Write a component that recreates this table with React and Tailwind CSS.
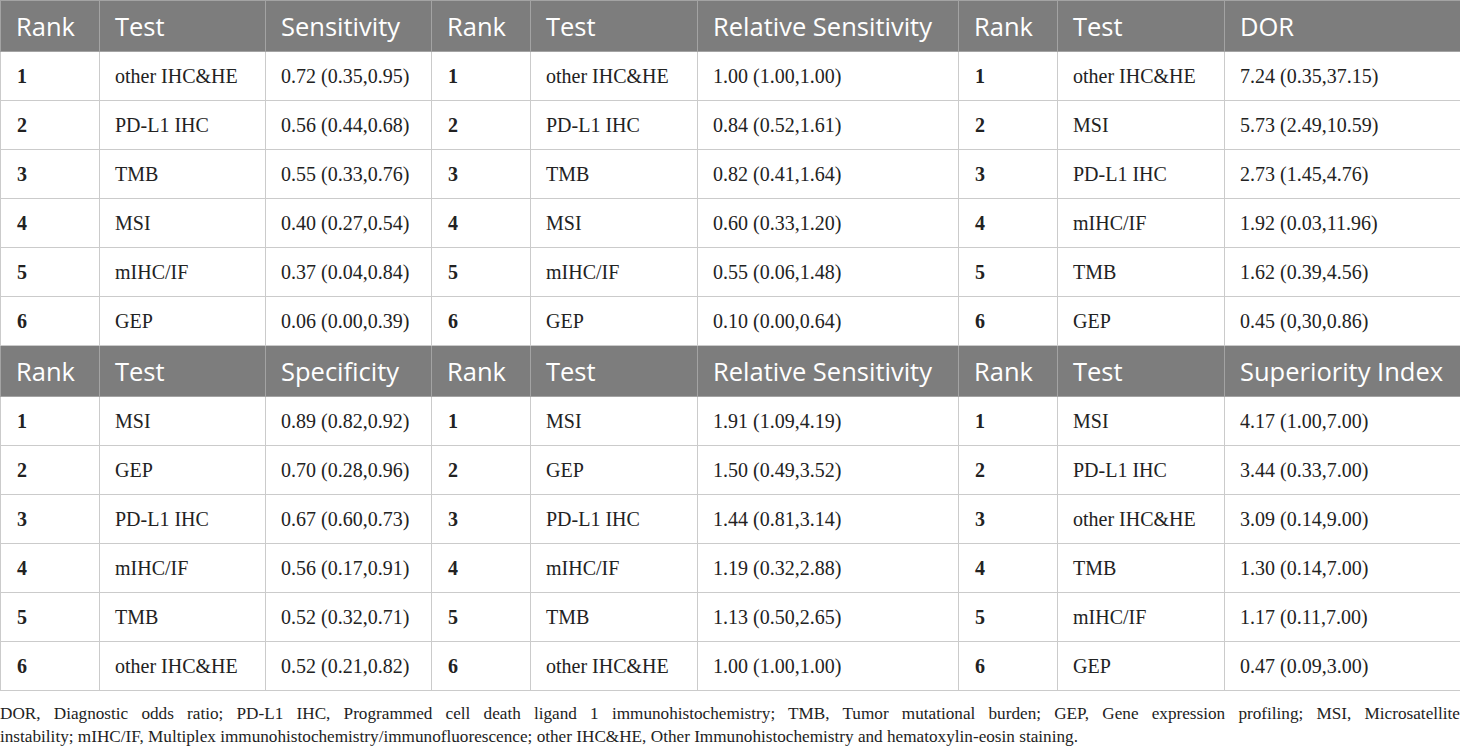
const cols = [99, 166, 166, 99, 167, 261, 99, 167, 236];

const blocks = [
  {
    heads: ['Sensitivity', 'Relative Sensitivity', 'DOR'],
    rows: [
      ['other IHC&HE', '0.72 (0.35,0.95)', 'other IHC&HE', '1.00 (1.00,1.00)', 'other IHC&HE', '7.24 (0.35,37.15)'],
      ['PD-L1 IHC', '0.56 (0.44,0.68)', 'PD-L1 IHC', '0.84 (0.52,1.61)', 'MSI', '5.73 (2.49,10.59)'],
      ['TMB', '0.55 (0.33,0.76)', 'TMB', '0.82 (0.41,1.64)', 'PD-L1 IHC', '2.73 (1.45,4.76)'],
      ['MSI', '0.40 (0.27,0.54)', 'MSI', '0.60 (0.33,1.20)', 'mIHC/IF', '1.92 (0.03,11.96)'],
      ['mIHC/IF', '0.37 (0.04,0.84)', 'mIHC/IF', '0.55 (0.06,1.48)', 'TMB', '1.62 (0.39,4.56)'],
      ['GEP', '0.06 (0.00,0.39)', 'GEP', '0.10 (0.00,0.64)', 'GEP', '0.45 (0,30,0.86)'],
    ],
  },
  {
    heads: ['Specificity', 'Relative Sensitivity', 'Superiority Index'],
    rows: [
      ['MSI', '0.89 (0.82,0.92)', 'MSI', '1.91 (1.09,4.19)', 'MSI', '4.17 (1.00,7.00)'],
      ['GEP', '0.70 (0.28,0.96)', 'GEP', '1.50 (0.49,3.52)', 'PD-L1 IHC', '3.44 (0.33,7.00)'],
      ['PD-L1 IHC', '0.67 (0.60,0.73)', 'PD-L1 IHC', '1.44 (0.81,3.14)', 'other IHC&HE', '3.09 (0.14,9.00)'],
      ['mIHC/IF', '0.56 (0.17,0.91)', 'mIHC/IF', '1.19 (0.32,2.88)', 'TMB', '1.30 (0.14,7.00)'],
      ['TMB', '0.52 (0.32,0.71)', 'TMB', '1.13 (0.50,2.65)', 'mIHC/IF', '1.17 (0.11,7.00)'],
      ['other IHC&HE', '0.52 (0.21,0.82)', 'other IHC&HE', '1.00 (1.00,1.00)', 'GEP', '0.47 (0.09,3.00)'],
    ],
  },
];

function HeaderRow({ heads }) {
  const cells = heads.flatMap((h) => ['Rank', 'Test', h]);
  return (
    <tr className="h-[51px] bg-[#7d7d7d]">
      {cells.map((c, i) => (
        <th
          key={i}
          className="border border-[#a3a3a3] px-[15px] text-left align-middle font-normal text-[25.5px] text-white font-['Open_Sans',sans-serif] whitespace-nowrap"
        >
          {c}
        </th>
      ))}
    </tr>
  );
}

function BodyRow({ rank, cells }) {
  const out = [];
  for (let g = 0; g < 3; g++) {
    out.push(
      <td key={`r${g}`} className="border border-[#cbcbcb] px-[16px] font-bold">
        {rank}
      </td>
    );
    out.push(
      <td key={`t${g}`} className="border border-[#cbcbcb] px-[15px]">
        {cells[g * 2]}
      </td>
    );
    out.push(
      <td key={`v${g}`} className="border border-[#cbcbcb] px-[15px]">
        {cells[g * 2 + 1]}
      </td>
    );
  }
  return <tr className="h-[49px] align-middle">{out}</tr>;
}

export default function App() {
  return (
    <div className="w-[1460px] bg-white text-[#222] font-['Liberation_Serif',serif]">
      <table className="w-[1460px] table-fixed border-collapse text-[20px] whitespace-nowrap">
        <colgroup>
          {cols.map((w, i) => (
            <col key={i} style={{ width: w }} />
          ))}
        </colgroup>
        <tbody>
          {blocks.map((b, bi) => [
            <HeaderRow key={`h${bi}`} heads={b.heads} />,
            ...b.rows.map((r, ri) => <BodyRow key={`${bi}-${ri}`} rank={ri + 1} cells={r} />),
          ])}
        </tbody>
      </table>
      <div className="pt-[11px] text-[17.2px] leading-[23px]">
        <p className="text-justify [text-align-last:justify]">
          DOR, Diagnostic odds ratio; PD-L1 IHC, Programmed cell death ligand 1 immunohistochemistry; TMB, Tumor mutational burden; GEP, Gene expression profiling; MSI, Microsatellite
        </p>
        <p>
          instability; mIHC/IF, Multiplex immunohistochemistry/immunofluorescence; other IHC&amp;HE, Other Immunohistochemistry and hematoxylin-eosin staining.
        </p>
      </div>
    </div>
  );
}
